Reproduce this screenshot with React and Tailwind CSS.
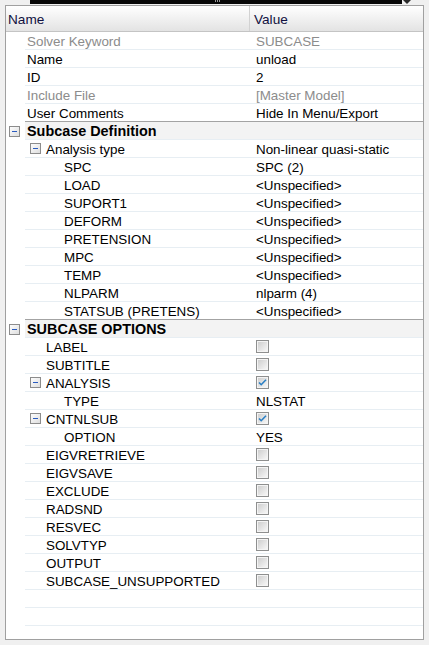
import React from "react";

const rows = [
  { l: "Solver Keyword", v: "SUBCASE", lvl: 0, dis: true },
  { l: "Name", v: "unload", lvl: 0 },
  { l: "ID", v: "2", lvl: 0 },
  { l: "Include File", v: "[Master Model]", lvl: 0, dis: true },
  { l: "User Comments", v: "Hide In Menu/Export", lvl: 0 },
  { l: "Subcase Definition", group: true },
  { l: "Analysis type", v: "Non-linear quasi-static", lvl: 1, tog: true },
  { l: "SPC", v: "SPC (2)", lvl: 2 },
  { l: "LOAD", v: "<Unspecified>", lvl: 2 },
  { l: "SUPORT1", v: "<Unspecified>", lvl: 2 },
  { l: "DEFORM", v: "<Unspecified>", lvl: 2 },
  { l: "PRETENSION", v: "<Unspecified>", lvl: 2 },
  { l: "MPC", v: "<Unspecified>", lvl: 2 },
  { l: "TEMP", v: "<Unspecified>", lvl: 2 },
  { l: "NLPARM", v: "nlparm (4)", lvl: 2 },
  { l: "STATSUB (PRETENS)", v: "<Unspecified>", lvl: 2 },
  { l: "SUBCASE OPTIONS", group: true },
  { l: "LABEL", cb: false, lvl: 1 },
  { l: "SUBTITLE", cb: false, lvl: 1 },
  { l: "ANALYSIS", cb: true, lvl: 1, tog: true },
  { l: "TYPE", v: "NLSTAT", lvl: 2 },
  { l: "CNTNLSUB", cb: true, lvl: 1, tog: true },
  { l: "OPTION", v: "YES", lvl: 2 },
  { l: "EIGVRETRIEVE", cb: false, lvl: 1 },
  { l: "EIGVSAVE", cb: false, lvl: 1 },
  { l: "EXCLUDE", cb: false, lvl: 1 },
  { l: "RADSND", cb: false, lvl: 1 },
  { l: "RESVEC", cb: false, lvl: 1 },
  { l: "SOLVTYP", cb: false, lvl: 1 },
  { l: "OUTPUT", cb: false, lvl: 1 },
  { l: "SUBCASE_UNSUPPORTED", cb: false, lvl: 1 },
  { empty: true },
  { empty: true },
  { empty: true },
];

function Minus() {
  return (
    <svg width="11" height="11" viewBox="0 0 11 11" className="shrink-0">
      <defs>
        <linearGradient id="mg" x1="0" y1="0" x2="1" y2="1">
          <stop offset="0" stopColor="#ffffff" />
          <stop offset="1" stopColor="#dcdcdc" />
        </linearGradient>
      </defs>
      <rect x="0.5" y="0.5" width="10" height="10" fill="url(#mg)" stroke="#8c8c8c" />
      <rect x="3" y="5" width="5" height="1" fill="#2a5bbf" />
    </svg>
  );
}

function Check({ on }) {
  return (
    <svg width="13" height="13" viewBox="0 0 13 13" className="shrink-0">
      <defs>
        <linearGradient id="cg" x1="0" y1="0" x2="1" y2="1">
          <stop offset="0" stopColor="#cfcfcf" />
          <stop offset="1" stopColor="#f6f6f6" />
        </linearGradient>
      </defs>
      <rect x="0.5" y="0.5" width="12" height="12" fill="#f4f4f4" stroke="#8e8f8f" />
      <rect x="2" y="2" width="9" height="9" fill="url(#cg)" />
      {on && (
        <path d="M3 6.5 L5.2 8.7 L10 3.8" fill="none" stroke="#2a7fc4" strokeWidth="1.6" />
      )}
    </svg>
  );
}

function Row({ r, nextGroup }) {
  const sep = nextGroup ? "border-[#a3a3a3]" : "border-[#e7eef3]";
  if (r.group) {
    return (
      <div className="flex h-[18px]">
        <div className="w-[19px] shrink-0 flex items-center pl-[3px] bg-white">
          <Minus />
        </div>
        <div className={`flex-1 flex items-center bg-[#f3f3f3] border-b ${sep} pl-[2px] pt-px font-bold text-[14.4px] text-black`}>
          {r.l}
        </div>
      </div>
    );
  }
  if (r.empty) {
    return (
      <div className="flex h-[18px]">
        <div className="w-[19px] shrink-0" />
        <div className={`flex-1 border-b ${sep}`} />
      </div>
    );
  }
  const pad = r.lvl === 0 ? "pl-[2px]" : r.lvl === 1 ? (r.tog ? "pl-[5px]" : "pl-[21px]") : "pl-[39px]";
  const col = r.dis ? "text-[#8c8c8c]" : "text-black";
  return (
    <div className="flex h-[18px]">
      <div className="w-[19px] shrink-0" />
      <div className={`flex-1 flex border-b ${sep}`}>
        <div className={`w-[226px] shrink-0 flex items-center ${pad} ${col} whitespace-nowrap overflow-hidden`}>
          {r.tog && <span className="mr-[5px] flex"><Minus /></span>}
          <span className="pt-[2px]">{r.l}</span>
        </div>
        <div className={`flex-1 flex items-center pl-[5px] ${col} whitespace-nowrap`}>
          {r.cb !== undefined ? <Check on={r.cb} /> : <span className="pt-[2px]">{r.v}</span>}
        </div>
      </div>
    </div>
  );
}

export default function App() {
  return (
    <div className="w-[429px] h-[645px] bg-[#f0f0f0] overflow-hidden font-['Liberation_Sans',Arial,sans-serif] text-[13.4px] leading-none">
      <div className="flex h-[5px]">
        <div className="w-[30px] shrink-0" />
        <div className="w-[372px] h-[4px] bg-[#080808] flex justify-center pl-[2px]">
          <div className="flex gap-[1px] h-[2px]">
            <div className="w-[1px] bg-[#9a9a9a]" />
            <div className="w-[1px] bg-[#9a9a9a]" />
            <div className="w-[1px] bg-[#9a9a9a]" />
          </div>
        </div>
        <svg width="10" height="5" viewBox="0 0 10 5" className="shrink-0">
          <path d="M1 0 L9 0 L5 4 Z" fill="#2a2a2a" />
        </svg>
      </div>
      <div className="ml-[5px] w-[419px] h-[635px] border border-[#a0a0a0] bg-white overflow-hidden">
        <div className="flex h-[26px] border-b border-[#c4c4c4] bg-[linear-gradient(to_bottom,#ffffff,#e3e3e3)] text-[#101040] text-[13.6px]">
          <div className="w-[244px] shrink-0 flex items-center pl-[2px] pt-[2px] border-r border-[#d2d2d2]">Name</div>
          <div className="flex-1 flex items-center pl-[4px] pt-[2px]">Value</div>
        </div>
        {rows.map((r, i) => (
          <Row key={i} r={r} nextGroup={rows[i + 1] && rows[i + 1].group} />
        ))}
      </div>
    </div>
  );
}
